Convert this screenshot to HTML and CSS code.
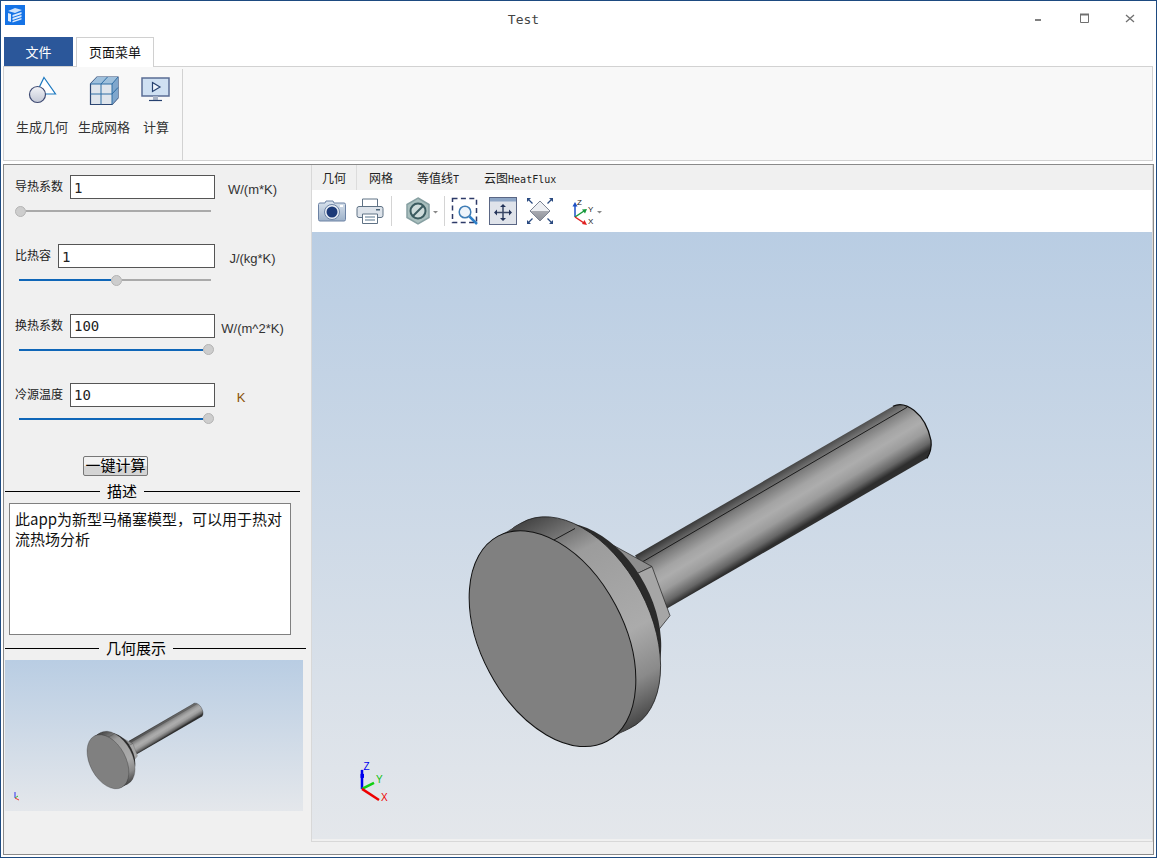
FILE: index.html
```html
<!DOCTYPE html>
<html lang="zh">
<head>
<meta charset="utf-8">
<title>Test</title>
<link rel="stylesheet" href="styles.css">
</head>
<body>
<div class="window">
  <header class="titlebar">
    <svg class="app-icon" width="20" height="20" viewBox="0 0 20 20">
      <rect width="20" height="20" fill="#1573e6"/>
      <path d="M3 6 10 3l7 2-7 3z" fill="#cfe3fb"/>
      <path d="M3 8v8l3 1V9zM7.500 10v2l9-3V7zM7.500 13v2l9-3v-2zM7.500 16v1.500l9-3V13z" fill="#dcebfd"/>
    </svg>
    <div class="title">Test</div>
    <div class="controls">
      <div class="ctl"><svg width="12" height="12" viewBox="0 0 12 12"><rect x="3" y="6" width="6" height="2" fill="#808080"/></svg></div>
      <div class="ctl"><svg width="12" height="12" viewBox="0 0 12 12"><path d="M2.500 1.500h8v8h-8z" fill="none" stroke="#707070"/><path d="M2 1.500h9" stroke="#707070" stroke-width="2"/></svg></div>
      <div class="ctl"><svg width="12" height="12" viewBox="0 0 12 12"><path d="M2 2l8 7M10 2l-8 7" fill="none" stroke="#707070" stroke-width="1.300"/></svg></div>
    </div>
  </header>

  <nav class="ribbon-tabs">
    <div class="rtab-file">文件</div>
    <div class="rtab-page">页面菜单</div>
  </nav>

  <section class="ribbon">
    <div class="rb-item">
      <svg width="30" height="30" viewBox="0 0 30 30">
        <path d="M17 2.500 28.500 19H9z" fill="#fff" stroke="#1b78c0" stroke-width="1.200"/>
        <defs><linearGradient id="g-c" x1="0" y1="0" x2="0" y2="1"><stop offset="0" stop-color="#f2f3f7"/><stop offset="1" stop-color="#c3c8d6"/></linearGradient></defs>
        <circle cx="10.500" cy="19.500" r="8" fill="url(#g-c)" stroke="#3e4a72" stroke-width="1.200"/>
      </svg>
      <span>生成几何</span>
    </div>
    <div class="rb-item">
      <svg width="30" height="30" viewBox="0 0 30 30">
        <path d="M1.500 9 8 2h21v21l-6 6.500H1.500z" fill="#dfe5ec" stroke="#2c4672" stroke-width="1.200"/>
        <path d="M1.500 9 8 2h21l-6 7z" fill="#9fc0dc"/>
        <path d="M23 9l6-7v21l-6 6.500z" fill="#7fa6cc"/>
        <path d="M1.500 9H23v20.500M1.500 19H23M12 9v20.500M23 9 29 2M23 19l6-6.500M12 9l6.500-7" fill="none" stroke="#2f6ea5" stroke-width="1"/>
      </svg>
      <span>生成网格</span>
    </div>
    <div class="rb-item rb-item-wide">
      <svg width="30" height="30" viewBox="0 0 30 30">
        <rect x="1" y="3" width="27" height="18" fill="#cfe0f2" stroke="#5a6c94" stroke-width="1.500"/>
        <path d="M11.500 7.500 19 12l-7.500 4.500z" fill="#eef4fb" stroke="#25406f" stroke-width="1.200"/>
        <path d="M12 21h5v4h-5z" fill="#aab4c6"/>
        <path d="M8 25.500h13" stroke="#25406f" stroke-width="1.200"/>
      </svg>
      <span>计算</span>
    </div>
    <div class="rb-sep"></div>
  </section>

  <main class="main">
    <aside class="side">
      <div class="param">
        <div class="param-row">
          <label class="plabel">导热系数</label>
          <input class="pinput" value="1">
          <span class="unit">W/(m*K)</span>
        </div>
        <div class="slider slider-start"><span class="thumb"></span><span class="rest"></span></div>
      </div>
      <div class="param">
        <div class="param-row">
          <label class="plabel">比热容</label>
          <input class="pinput" value="1">
          <span class="unit">J/(kg*K)</span>
        </div>
        <div class="slider"><span class="fill" style="width:92px"></span><span class="thumb"></span><span class="rest"></span></div>
      </div>
      <div class="param">
        <div class="param-row">
          <label class="plabel">换热系数</label>
          <input class="pinput" value="100">
          <span class="unit">W/(m^2*K)</span>
        </div>
        <div class="slider"><span class="fill" style="width:184px"></span><span class="thumb"></span></div>
      </div>
      <div class="param">
        <div class="param-row">
          <label class="plabel">冷源温度</label>
          <input class="pinput" value="10">
          <span class="unit unit-k">K</span>
        </div>
        <div class="slider"><span class="fill" style="width:184px"></span><span class="thumb"></span></div>
      </div>

      <div class="run-wrap"><button class="run">一键计算</button></div>

      <div class="group group-a"><i></i><span>描述</span><i></i></div>
      <div class="desc">此app为新型马桶塞模型，可以用于热对流热场分析</div>
      <div class="group group-b"><i></i><span>几何展示</span><i></i></div>
      <div class="thumbview">
        <svg width="298" height="151" viewBox="0 0 298 151">
          <g transform="translate(-35.700 -58.400) scale(.251)"><use href="#model"/></g>
          <path d="M10 138v-6" stroke="#3333ee" stroke-width="1"/>
          <path d="M10 138l3-2" stroke="#33bb33" stroke-width="1"/>
          <path d="M10 138l4 2" stroke="#ee3333" stroke-width="1"/>
        </svg>
      </div>
    </aside>

    <section class="right">
      <div class="pane">
        <div class="vtabs">
          <div class="vtab vtab-first">几何</div>
          <div class="vtab">网格</div>
          <div class="vtab">等值线<b>T</b></div>
          <div class="vtab vtab-last">云图<b>HeatFlux</b></div>
        </div>
        <div class="toolbar">
          <svg class="t-camera" width="28" height="28" viewBox="0 0 28 28">
            <defs><linearGradient id="g-cam" x1="0" y1="0" x2="0" y2="1"><stop offset="0" stop-color="#dbe4ee"/><stop offset="1" stop-color="#9db1c9"/></linearGradient></defs>
            <path d="M2 6h5l1-2h7l1 2h10a1.500 1.500 0 0 1 1.500 1.500v15a1.500 1.500 0 0 1-1.500 1.500H2a1.500 1.500 0 0 1-1.500-1.500v-15A1.500 1.500 0 0 1 2 6z" fill="url(#g-cam)" stroke="#6c82a4"/>
            <circle cx="14" cy="15" r="7.500" fill="#e8eef5" stroke="#6c82a4"/>
            <circle cx="14" cy="15" r="5.500" fill="#1c3a78"/>
            <rect x="22" y="8" width="3" height="2" fill="#fff"/>
          </svg>
          <svg class="t-print" width="28" height="28" viewBox="0 0 28 28">
            <path d="M6.500 10V2h15v8" fill="#fff" stroke="#5f7285"/>
            <rect x="1" y="9.500" width="26" height="11" rx="2" fill="#dde3ea" stroke="#5f7285"/>
            <rect x="20" y="12" width="4" height="1.500" fill="#4a6478"/>
            <path d="M6.500 17h15v9.500h-15z" fill="#fff" stroke="#5f7285"/>
            <path d="M9 20h10M9 23h10" stroke="#8fa2b2" stroke-width="1.500"/>
          </svg>
          <div class="t-sep t-sep-a"></div>
          <svg class="t-disc" width="34" height="28" viewBox="0 0 34 28">
            <path d="M14 1 25 7.500v13L14 27 3 20.500v-13z" fill="#a9bfbe" stroke="#87a0a2" stroke-width="1.500"/>
            <circle cx="14" cy="14" r="7.500" fill="#cfdcdb" stroke="#3c5c60" stroke-width="2"/>
            <path d="M9 19 19 9" stroke="#3c5c60" stroke-width="2"/>
            <path d="M29 14h5l-2.500 2.500z" fill="#888"/>
          </svg>
          <div class="t-sep t-sep-b"></div>
          <svg class="t-region" width="28" height="28" viewBox="0 0 28 28">
            <rect x="1.500" y="1.500" width="24" height="24" fill="none" stroke="#2d3a68" stroke-width="1.500" stroke-dasharray="5 3.400"/>
            <circle cx="14" cy="15" r="5.800" fill="#eef4fa" stroke="#3f7db5" stroke-width="1.500"/>
            <path d="M18.500 19.500 26 27" stroke="#2e80c8" stroke-width="2.500"/>
          </svg>
          <svg class="t-fit" width="28" height="28" viewBox="0 0 28 28">
            <rect x=".5" y=".5" width="27" height="27" fill="#dfe3ea" stroke="#5a6684"/>
            <rect x="1" y="1" width="26" height="3.500" fill="#8ea6c6"/>
            <path d="M14 9v13M8 15.500h12" stroke="#3a4866" stroke-width="1.500"/>
            <path d="M14 7l3 3h-6zM14 24l3-3h-6zM5 15.500l3-3v6zM23 15.500l-3-3v6z" fill="#24345a"/>
          </svg>
          <svg class="t-iso" width="28" height="28" viewBox="0 0 28 28">
            <defs><linearGradient id="g-iso" x1="0" y1="0" x2="0" y2="1"><stop offset="0" stop-color="#c4c6cc"/><stop offset="1" stop-color="#8d9098"/></linearGradient></defs>
            <path d="M14 4 24 14 14 24 4 14z" fill="url(#g-iso)"/>
            <path d="M14 4 24 14H4z" fill="#eceef2"/>
            <path d="M14 4 24 14 14 24 4 14z" fill="none" stroke="#7c8494"/>
            <path d="M1 1l4 0-4 4zM27 1l-4 0 4 4zM1 27l4 0-4-4zM27 27l-4 0 4-4z" fill="#2a4a80"/>
            <path d="M2 2l4.500 4.500M26 2l-4.500 4.500M2 26l4.500-4.500M26 26l-4.500-4.500" stroke="#2a4a80" stroke-width="1.300"/>
          </svg>
          <svg class="t-triad" width="32" height="28" viewBox="0 0 32 28">
            <path d="M4 20V8" stroke="#1c4fc4" stroke-width="1.500"/>
            <path d="M4 5l2.500 4.500h-5z" fill="#1c4fc4"/>
            <path d="M4 20 13 14" stroke="#169a3c" stroke-width="1.500"/>
            <path d="M16 12l-2 4.500-3-4z" fill="#169a3c"/>
            <path d="M4 20 13 26" stroke="#e02020" stroke-width="1.500"/>
            <path d="M16 28l-5-1 2.500-4z" fill="#e02020"/>
            <text x="6" y="8" class="t-axis">Z</text>
            <text x="17" y="15" class="t-axis">Y</text>
            <text x="17" y="27" class="t-axis">X</text>
            <path d="M26 14h5l-2.500 2.500z" fill="#888"/>
          </svg>
        </div>
        <div class="viewport">
          <svg class="scene" viewBox="312 232 840 606" preserveAspectRatio="none">
            <defs>
              <linearGradient id="g-shaft" gradientUnits="userSpaceOnUse" x1="635" y1="555" x2="667" y2="608">
                <stop offset="0" stop-color="#333"/>
                <stop offset=".12" stop-color="#5c5c5c"/>
                <stop offset=".22" stop-color="#7c7c7c"/>
                <stop offset=".42" stop-color="#a4a4a4"/>
                <stop offset=".55" stop-color="#adadad"/>
                <stop offset=".72" stop-color="#9c9c9c"/>
                <stop offset=".9" stop-color="#666"/>
                <stop offset="1" stop-color="#2e2e2e"/>
              </linearGradient>
              <linearGradient id="g-rim" gradientUnits="userSpaceOnUse" x1="510" y1="512" x2="632" y2="740">
                <stop offset="0" stop-color="#2e2e2e"/>
                <stop offset=".12" stop-color="#606060"/>
                <stop offset=".26" stop-color="#9c9c9c"/>
                <stop offset=".62" stop-color="#ababab"/>
                <stop offset=".8" stop-color="#8a8a8a"/>
                <stop offset="1" stop-color="#333"/>
              </linearGradient>
              <g id="model">
                <path d="M635 555 893 406C905 400 925 412 931 440 932 448 930 453 927 458L667 608Z" fill="url(#g-shaft)"/>
                <path d="M643 561 907 407" stroke="#111" stroke-width=".9" fill="none"/>
                <path d="M893 406C905 400 925 412 931 440 932 448 930 453 927 458" stroke="#111" stroke-width="1.200" fill="none"/>
                <path d="M610 543 652 566 635 574 620 570Z" fill="#8e8e8e" stroke="#222" stroke-width=".7"/>
                <path d="M635 574 652 566 670 615 658 630 645 612Z" fill="#a6a6a6" stroke="#222" stroke-width=".7"/>
                <ellipse cx="585" cy="616" rx="100" ry="68" transform="rotate(62 585 616)" fill="#2b2b2b"/>
                <path d="M521.100 522.600A116 71.400 62 1 1 629.900 727.400 116 71.400 62 1 1 521.100 522.600Z" fill="url(#g-rim)" stroke="#1a1a1a" stroke-width=".8"/>
                <path d="M498 536 607 740 630 727 521 523Z" fill="url(#g-rim)"/>
                <path d="M553 540 575 528" stroke="#111" stroke-width=".9"/>
                <ellipse cx="552.500" cy="638" rx="116" ry="71.400" transform="rotate(62 552.500 638)" fill="#808080" stroke="#111" stroke-width="1"/>
              </g>
            </defs>
            <use href="#model"/>
            <path d="M362 788V769" stroke="#0000ee" stroke-width="2.500"/>
            <rect x="360.500" y="773" width="3.500" height="4" fill="#0000ee"/>
            <path d="M362 788 374 782" stroke="#10d010" stroke-width="2.500"/>
            <path d="M362 788 379 799" stroke="#ee0000" stroke-width="2.500"/>
            <text x="363.500" y="769" class="axis axis-z">Z</text>
            <text x="376" y="782" class="axis axis-y">Y</text>
            <text x="381" y="800" class="axis axis-x">X</text>
          </svg>
        </div>
      </div>
    </section>
  </main>
</div>
</body>
</html>
```
FILE: styles.css
```css
* { box-sizing: border-box; }
html, body { margin: 0; padding: 0; }
body {
  width: 1157px;
  height: 858px;
  overflow: hidden;
  background: #fff;
  font-family: "Noto Sans CJK SC", "Liberation Sans", sans-serif;
  color: #222;
}
.window {
  width: 1157px;
  height: 858px;
  border: 1px solid #1d4a80;
  background: #fff;
  padding: 0 2px 2px;
  display: flex;
  flex-direction: column;
}

/* title bar */
.titlebar { height: 36px; display: flex; align-items: flex-start; }
.app-icon { margin: 4px 0 0 2px; flex: none; }
.title {
  flex: 1;
  margin-left: 7px;
  text-align: center;
  font: 13px/37px "DejaVu Sans Mono", monospace;
  color: #444;
}
.controls { display: flex; width: 138px; height: 36px; margin-right: 1px; }
.ctl { width: 46px; height: 36px; display: flex; align-items: center; justify-content: center; }

/* ribbon */
.ribbon-tabs { height: 29px; display: flex; align-items: stretch; }
.rtab-file {
  width: 69px;
  margin-left: 1px;
  background: #2b579a;
  color: #fff;
  font-size: 13px;
  line-height: 29px;
  text-align: center;
}
.rtab-page {
  width: 78px;
  margin-left: 3px;
  height: 30px;
  position: relative;
  z-index: 1;
  background: #fff;
  border: 1px solid #d0d0d0;
  border-bottom: 0;
  font-size: 13px;
  line-height: 28px;
  text-align: center;
  color: #111;
}
.ribbon {
  height: 95px;
  margin-right: 1px;
  background: #f8f8f8;
  border: 1px solid #d2d2d2;
  display: flex;
  padding-left: 7px;
}
.rb-item {
  display: flex;
  flex-direction: column;
  align-items: center;
  padding: 8px 5px 0;
  font-size: 13px;
  color: #333;
}
.rb-item svg { display: block; }
.rb-item span { margin-top: 12px; line-height: 20px; white-space: nowrap; }
.rb-item-wide { width: 42px; padding-left: 0; padding-right: 0; }
.rb-sep { width: 1px; margin: 2px 0 0 5px; height: 91px; background: #d2d2d2; }

/* main frame */
.main {
  margin-top: 3px;
  height: 691px;
  border: 1px solid #8a8a8a;
  background: #f0f0f0;
  display: flex;
}
.side { width: 307px; flex: none; padding-top: 10px; }
.param { height: 69.330px; }
.param-row { display: flex; align-items: flex-start; height: 24px; width: 286px; }
.plabel {
  margin-left: 11px;
  font-size: 12px;
  line-height: 22px;
  white-space: nowrap;
  color: #222;
}
.pinput {
  flex: 1;
  min-width: 0;
  height: 24px;
  margin-left: 7px;
  padding: 1px 3px 0;
  border: 1px solid #555;
  border-radius: 0;
  background: #fff;
  font: 14px "DejaVu Sans Mono", monospace;
  color: #222;
  outline: 0;
}
.unit {
  flex: none;
  width: 75px;
  text-align: center;
  font: 13px/30px "Liberation Sans", sans-serif;
  color: #333;
}
.unit-k { padding-right: 23px; color: #8a5208; }
.slider {
  display: flex;
  align-items: center;
  height: 11px;
  width: 192px;
  margin: 6.500px 0 0 15px;
}
.slider-start { width: 196px; margin-left: 11px; }
.fill { display: block; height: 2px; background: #0f66b8; flex: none; }
.rest { display: block; height: 2px; background: #aaa; flex: 1; }
.thumb {
  display: block;
  flex: none;
  width: 11px;
  height: 11px;
  border-radius: 50%;
  background: #cdcdcd;
  border: 1px solid #b4b4b4;
}
.run-wrap { padding-top: 3.700px; height: 24px; text-align: center; }
.run {
  display: block;
  width: 65px;
  height: 20px;
  margin-left: 79px;
  padding: 0 0 3px;
  border: 1px solid #777;
  border-radius: 2px;
  background: linear-gradient(#f2f2f2 50%, #d4d4d4 50%);
  font: 15px/15px "Noto Sans CJK SC", sans-serif;
  color: #000;
}
.group {
  display: flex;
  align-items: center;
  height: 20px;
  margin-left: 1px;
  font-size: 15px;
  line-height: 20px;
  color: #000;
}
.group i { flex: 1; height: 1px; background: #000; }
.group i:first-child { flex: none; }
.group span { margin: 0 7px; }
.group-a { width: 295px; margin-top: 5px; }
.group-a i:first-child { width: 95px; }
.group-b { width: 301px; margin-top: 3px; }
.group-b i:first-child { width: 94px; }
.desc {
  width: 282px;
  height: 132px;
  margin: 2px 0 0 5px;
  padding: 5px 5px;
  border: 1px solid #808080;
  background: #fff;
  font-size: 15px;
  line-height: 20px;
  color: #111;
}
.thumbview {
  width: 298px;
  height: 151px;
  margin: 2px 0 0 1px;
  background: linear-gradient(#b9cde3, #e4e7eb);
}
.thumbview svg { display: block; }

/* right pane */
.right { flex: 1; min-width: 0; padding-bottom: 12px; display: flex; }
.pane {
  flex: 1;
  min-width: 0;
  border: 1px solid #d8d8d8;
  border-top: 0;
  display: flex;
  flex-direction: column;
  padding-bottom: 2px;
}
.vtabs {
  height: 25px;
  flex: none;
  background: #f0f0f0;
  display: flex;
  font-size: 12px;
  line-height: 26px;
  color: #222;
}
.vtabs b { font: 400 10px "DejaVu Sans Mono", monospace; }
.vtab { padding: 0 12px; white-space: nowrap; }
.vtab-first { width: 45px; padding: 0 0 0 10px; border-right: 1px solid #dcdcdc; }
.vtab-last { padding-left: 13px; }
.toolbar {
  height: 42px;
  flex: none;
  background: #fff;
  display: flex;
  align-items: center;
  padding-left: 6px;
}
.toolbar svg { display: block; flex: none; }
.t-print { margin-left: 10px; }
.t-sep { width: 1px; height: 30px; background: #d4d4d4; flex: none; }
.t-sep-a { margin-left: 7px; }
.t-disc { margin-left: 12px; }
.t-sep-b { margin-left: 6px; }
.t-region { margin-left: 6px; }
.t-fit { margin-left: 10px; }
.t-iso { margin-left: 9px; }
.t-triad { margin-left: 17px; }
.t-axis { font: 8px "Liberation Sans", sans-serif; fill: #222; }
.viewport {
  flex: 1;
  min-height: 0;
  background: linear-gradient(#b9cde3, #e4e7eb);
}
.scene { display: block; width: 100%; height: 100%; }
.axis { font: 10px "Liberation Sans", sans-serif; }
.axis-z { fill: #0000ee; }
.axis-y { fill: #10c010; }
.axis-x { fill: #ee0000; }
```
